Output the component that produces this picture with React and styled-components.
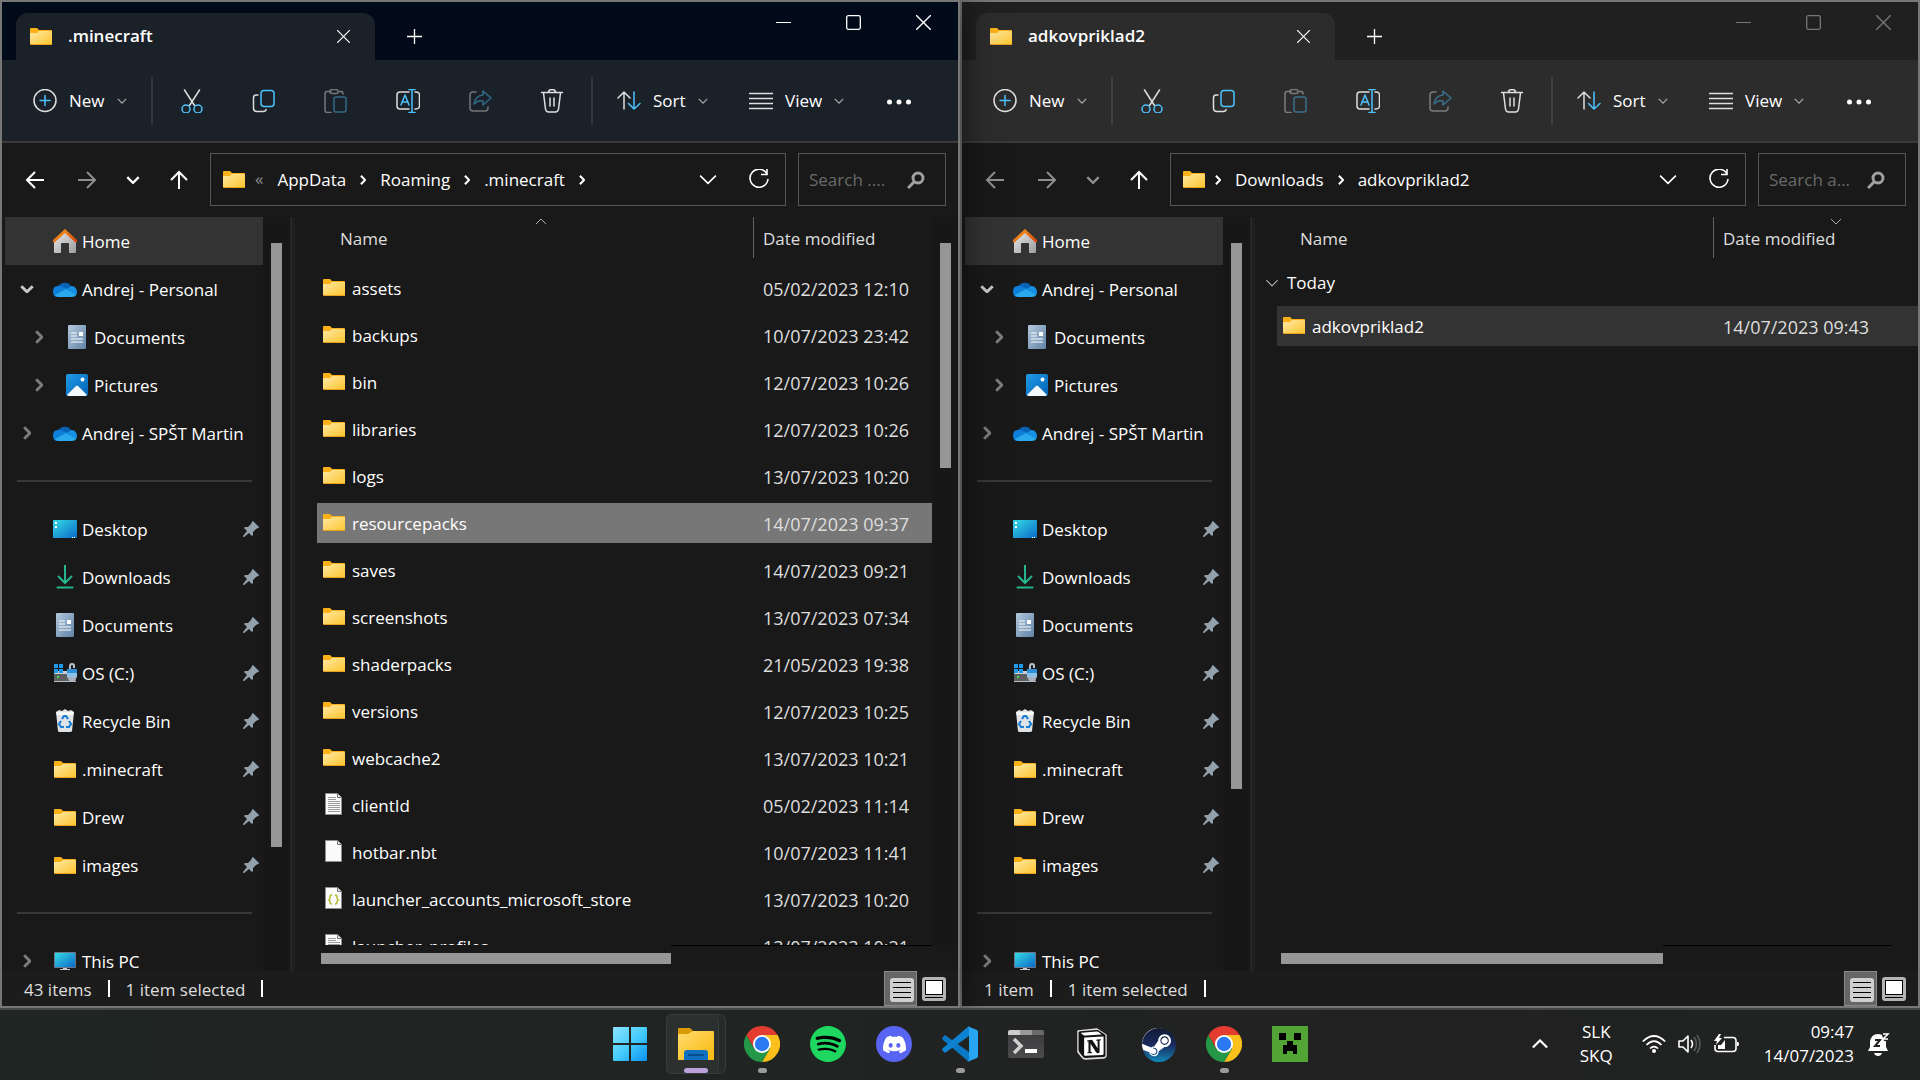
import React from "react";
import styled, { createGlobalStyle, css } from "styled-components";
import { SiDiscord, SiNotion, SiSpotify, SiSteam } from "react-icons/si";

const GlobalStyle = createGlobalStyle`
  *, *::before, *::after {
    box-sizing: border-box;
  }

  body {
    margin: 0;
    background: #191919;
    color: #fff;
    font-family: "Open Sans", "Noto Sans", sans-serif;
    font-size: 17px;
    line-height: 24px;
    overflow: hidden;
  }

  button, input, table {
    font: inherit;
    color: inherit;
  }

  button {
    display: flex;
    align-items: center;
    padding: 0;
    border: 0;
    background: none;
    text-align: left;
  }

  svg {
    display: block;
    flex: none;
  }
`;

const BLUE = "#4cc2ff";

/* ---------- icons ---------- */

const Defs = () => (
  <svg width="0" height="0" style={{ position: "absolute" }} aria-hidden="true">
    <defs>
      <linearGradient id="folder" x1="0" y1="0" x2="1" y2="1">
        <stop offset="0" stopColor="#ffe9a6" />
        <stop offset="1" stopColor="#fdc52f" />
      </linearGradient>
      <linearGradient id="bigFolder" x1="0" y1="0" x2="1" y2="1">
        <stop offset="0" stopColor="#ffdc6e" />
        <stop offset="1" stopColor="#f8b80c" />
      </linearGradient>
      <linearGradient id="screen" x1="0" y1="0" x2="1" y2="1">
        <stop offset="0" stopColor="#35dbe6" />
        <stop offset="1" stopColor="#0b68c8" />
      </linearGradient>
      <linearGradient id="paper" x1="0" y1="0" x2="1" y2="1">
        <stop offset="0" stopColor="#b4c8dc" />
        <stop offset="1" stopColor="#5f83a6" />
      </linearGradient>
      <linearGradient id="photo" x1="0" y1="0" x2="1" y2="1">
        <stop offset="0" stopColor="#1d9de8" />
        <stop offset="1" stopColor="#0560b5" />
      </linearGradient>
      <linearGradient id="roof" x1="0" y1="0" x2="1" y2="1">
        <stop offset="0" stopColor="#f9a01b" />
        <stop offset="1" stopColor="#d5420b" />
      </linearGradient>
      <linearGradient id="wall" x1="0" y1="0" x2="1" y2="1">
        <stop offset="0" stopColor="#e9e9e9" />
        <stop offset="1" stopColor="#9d9d9d" />
      </linearGradient>
      <linearGradient id="arrow" x1="0" y1="0" x2="1" y2="1">
        <stop offset="0" stopColor="#35c481" />
        <stop offset="1" stopColor="#12a5a0" />
      </linearGradient>
      <linearGradient id="start" x1="0" y1="0" x2="1" y2="1">
        <stop offset="0" stopColor="#8be3fd" />
        <stop offset="0.5" stopColor="#48ccfb" />
        <stop offset="1" stopColor="#0a93f5" />
      </linearGradient>
      <linearGradient id="steam" x1="0" y1="0" x2="0" y2="1">
        <stop offset="0" stopColor="#121a33" />
        <stop offset="0.5" stopColor="#1a2a5e" />
        <stop offset="1" stopColor="#1387b8" />
      </linearGradient>
      <linearGradient id="shell" x1="0" y1="0" x2="0" y2="1">
        <stop offset="0" stopColor="#3a3a3c" />
        <stop offset="1" stopColor="#4b4b4d" />
      </linearGradient>
    </defs>
  </svg>
);

const Folder = () => (
  <svg width="22" height="17" viewBox="0 0 22 17">
    <path d="M0 1q0-1 1-1h6l2 2h12q1 0 1 1v4H0z" fill="#fbb117" />
    <path d="M0 5h7l2-2h12q1 0 1 1v12H0z" fill="url(#folder)" />
    <path d="M0 16h22v1H1q-1 0-1-1z" fill="#e9a01c" />
  </svg>
);

const HomeIcon = () => (
  <svg width="24" height="24" viewBox="0 0 24 24">
    <path d="M1 11L12 2l11 9v12q0 1-1 1h-6v-9q0-1-1-1H9q-1 0-1 1v9H2q-1 0-1-1z" fill="url(#wall)" />
    <path d="M12 0L0 11v2q1 1 2 0L12 4l10 9q1 1 2 0v-2z" fill="url(#roof)" />
  </svg>
);

const Cloud = () => (
  <svg width="24" height="16" viewBox="0 0 24 16">
    <path d="M5 6a7 6 0 0 1 13-1l-4 7H3z" fill="#0862b4" />
    <path d="M5 5C1 5 0 8 0 11c0 2 1 4 3 5l13-6C12 6 9 5 5 5z" fill="#0f7fd8" />
    <path d="M14 8l4-3c4 0 6 3 6 6 0 2-1 4-3 4z" fill="#1491e2" />
    <path d="M2 14l11-6 10 6q-1 2-4 2H5q-2 0-3-2z" fill="#2aa8ec" />
  </svg>
);

const DocIcon = () => (
  <svg width="24" height="24" viewBox="0 0 24 24">
    <rect x="3" width="18" height="24" rx="1" fill="url(#paper)" />
    <path d="M6 8h6M6 11h6M6 14h12M6 17h12" stroke="#fff" strokeWidth="1.2" />
    <rect x="14" y="7" width="4" height="4" fill="#fff" />
  </svg>
);

const PicIcon = () => (
  <svg width="24" height="24" viewBox="0 0 24 24">
    <rect x="1" y="1" width="22" height="22" rx="2" fill="url(#photo)" />
    <path d="M2 22l9-9q1-1 2 0l9 9q-1 1-2 1H4q-1 0-2-1z" fill="#f4f9fd" />
    <circle cx="17.500" cy="6.500" r="2" fill="#fff" />
  </svg>
);

const DesktopIcon = () => (
  <svg width="24" height="18" viewBox="0 0 24 18">
    <rect width="24" height="18" rx="1" fill="url(#screen)" />
    <path d="M2 2h2v2H2zM2 6h2v2H2zM19 17h1v1h-1zM21 17h1v1h-1z" fill="#fff" />
  </svg>
);

const DownloadIcon = () => (
  <svg width="24" height="24" viewBox="0 0 24 24" fill="none" strokeWidth="2">
    <path d="M12 0v18M5 11l7 7 7-7" stroke="#26b58c" />
    <path d="M4 22h16v1H4z" fill="url(#arrow)" stroke="#26b58c" strokeWidth="1" />
  </svg>
);

const DriveIcon = () => (
  <svg width="24" height="20" viewBox="0 0 24 20">
    <path d="M1 10h22v9H1z" fill="#5c5f62" />
    <path d="M1 11L3 8h18l2 3z" fill="#c8ccd0" />
    <path d="M1 18h22v1H1z" fill="#b9bdc0" />
    <path d="M1 1h4v4H1zM6 1h4v4H6zM1 6h4v4H1zM6 6h4v4H6z" fill="#1c9cea" />
    <rect x="4" y="13" width="2" height="2" fill="#3ce03c" />
    <path d="M17 7V3q0-2 2-2t2 2v2" fill="none" stroke="#b6bfc7" strokeWidth="2" />
    <rect x="14" y="6" width="10" height="4" fill="#2b8fdb" />
    <rect x="14" y="10" width="10" height="4" fill="#8fbfe4" />
    <path d="M14 14h10l-3 5h-4z" fill="#a7b4bf" />
  </svg>
);

const BinIcon = () => (
  <svg width="24" height="24" viewBox="0 0 24 24">
    <path d="M3 3l3-2 3 1 3-2 3 2 3-1 3 2-2 19q0 1-2 1H7q-2 0-2-1z" fill="#dfe3e6" />
    <path d="M3 3h18l-1 3H4z" fill="#f9fafb" />
    <g fill="none" stroke="#1b7fd6" strokeWidth="2.200">
      <path d="M9 10l2-3h2l2 3" />
      <path d="M16 12l2 3-2 3h-3" />
      <path d="M11 18H8l-2-3 2-3" />
    </g>
  </svg>
);

const PcIcon = () => (
  <svg width="24" height="20" viewBox="0 0 24 20">
    <rect x="1" y="1" width="22" height="16" rx="1" fill="#66788a" />
    <rect x="2" y="2" width="20" height="14" fill="url(#screen)" />
    <path d="M10 17h4v1h3v1H7v-1h3z" fill="#c3ccd4" />
  </svg>
);

const Pin = () => (
  <svg width="16" height="16" viewBox="0 0 16 16">
    <path d="M10 0l6 6q0 1-1 1l-2 1-3 3v3l-1 1-3-3-5 4H0v-1l4-5-3-3 1-1h3l3-3 1-2q0-1 1-1z" fill="#93a1ac" />
  </svg>
);

const Page = ({ kind }) => (
  <svg width="22" height="22" viewBox="0 0 22 22">
    <path d="M2.500.5h12l4 4v17h-16z" fill="#fafafa" stroke="#8d8d8d" />
    <path d="M14.500.5v4h4" fill="#ddd" stroke="#777" />
    {kind === "text" && (
      <path d="M5 4.500h8M5 6.500h8M5 8.500h12M5 10.500h12M5 12.500h12M5 14.500h12M5 16.500h12M5 18.500h12" stroke="#9a9a9a" />
    )}
    {kind === "json" && (
      <path
        d="M9 8q-2 0-2 2t-1 3q1 0 1 2t2 2M12 8q2 0 2 2t1 3q-1 0-1 2t-2 2"
        fill="none"
        stroke="#b5b832"
        strokeWidth="1.500"
      />
    )}
  </svg>
);

const CHEVRONS = {
  down: "M0 0l5 5 5-5",
  up: "M0 5l5-5 5 5",
  right: "M0 0l5 5-5 5",
};

const Chevron = ({ dir = "down", size = 10, weight = 1.5, color = "currentColor" }) => {
  const right = dir === "right";
  return (
    <svg
      width={right ? size / 2 + 2 : size + 2}
      height={right ? size + 2 : size / 2 + 2}
      viewBox={right ? "-1 -1 7 12" : "-1 -1 12 7"}
      fill="none"
      stroke={color}
      strokeWidth={weight}
    >
      <path d={CHEVRONS[dir]} />
    </svg>
  );
};

const Cross = ({ size = 14 }) => (
  <svg width={size} height={size} viewBox="0 0 14 14" stroke="currentColor" strokeWidth="1.300">
    <path d="M0 0l14 14M14 0L0 14" />
  </svg>
);

const ToolIcon = ({ children }) => (
  <svg
    width="24"
    height="24"
    viewBox="0 0 24 24"
    fill="none"
    stroke="#dedede"
    strokeWidth="1.500"
    strokeLinecap="round"
    strokeLinejoin="round"
  >
    {children}
  </svg>
);

const NewIcon = () => (
  <ToolIcon>
    <circle cx="12" cy="11.500" r="11" />
    <path d="M12 6.500v10M7 11.500h10" stroke={BLUE} />
  </ToolIcon>
);

const CutIcon = () => (
  <ToolIcon>
    <path d="M4.500 1l10 15.500M19.500 1l-10 15.500" />
    <circle cx="6" cy="20" r="4" stroke={BLUE} />
    <circle cx="18" cy="20" r="4" stroke={BLUE} />
  </ToolIcon>
);

const CopyIcon = () => (
  <ToolIcon>
    <path d="M6 6H4Q1.500 6 1.500 9v10q0 3.500 3.500 3.500h6q3 0 3-2" />
    <rect x="9" y="1.500" width="13" height="16" rx="3" stroke={BLUE} />
  </ToolIcon>
);

const PasteIcon = () => (
  <ToolIcon>
    <g opacity="0.45">
      <path d="M7 2.500H3Q1 2.500 1 5v16q0 2.500 2 2.500h4M15 2.500h2q2 0 2 2.500" />
      <rect x="6" y="0.500" width="8" height="4" rx="2" />
      <rect x="10" y="8" width="12" height="15" rx="2" stroke={BLUE} />
    </g>
  </ToolIcon>
);

const RenameIcon = () => (
  <ToolIcon>
    <path d="M13 3H4Q1 3 1 6v11q0 3 3 3h9M19 3h1q3.500 0 3.500 3v11q0 3-3.500 3h-1" />
    <path d="M5 16l4-10 4 10M6 13h6M16 .5v23M13 .5h6M13 23.500h6" stroke={BLUE} />
  </ToolIcon>
);

const ShareIcon = () => (
  <ToolIcon>
    <g opacity="0.45">
      <path d="M8 3H5Q2 3 2 6v13q0 3 3 3h12q3 0 3-3v-1" />
      <path d="M15 2l8 7-8 7v-4q-5-1-9 3 1-8 9-9z" stroke={BLUE} />
    </g>
  </ToolIcon>
);

const TrashIcon = () => (
  <ToolIcon>
    <path d="M1.500 3.500h21M8.500 3q0-2.500 3.500-2.500t3.500 2.500M3.500 4l2 16q.5 3 3 3h7q2.500 0 3-3l2-16M10 9v8M14 9v8" />
  </ToolIcon>
);

const SortIcon = () => (
  <ToolIcon>
    <path d="M7 20V3M1 9l6-6 6 6" />
    <path d="M17 3v17M11.500 14.500l5.500 5.500 6-5.500" stroke={BLUE} />
  </ToolIcon>
);

const ViewIcon = () => (
  <ToolIcon>
    <path d="M0 4.500h24M0 9.500h24M0 14.500h24M0 19.500h24" strokeLinecap="butt" />
  </ToolIcon>
);

const DotsIcon = () => (
  <svg width="24" height="24" viewBox="0 0 24 24" fill="#fff">
    <circle cx="2.500" cy="13" r="2.500" />
    <circle cx="12" cy="13" r="2.500" />
    <circle cx="21.500" cy="13" r="2.500" />
  </svg>
);

const Arrow = ({ turn = 0, dim }) => (
  <svg width="20" height="20" viewBox="0 0 20 20" fill="none" stroke={dim ? "#8f8f8f" : "#fff"} strokeWidth="2">
    <path d="M19 10H2M10 2l-8 8 8 8" transform={`rotate(${turn} 10 10)`} />
  </svg>
);

const Refresh = () => (
  <svg width="22" height="22" viewBox="0 0 22 22" fill="none" stroke="#fff" strokeWidth="1.600">
    <path d="M19 5a9 9 0 1 0 1 5M19 0v5.500h-6" />
  </svg>
);

const Magnifier = () => (
  <svg width="18" height="18" viewBox="0 0 18 18" fill="none" stroke="#a0a0a0">
    <circle cx="11" cy="7" r="5" strokeWidth="3" />
    <path d="M7 11l-6 6" strokeWidth="3" />
  </svg>
);

const Details = () => (
  <svg width="24" height="24" viewBox="0 0 24 24">
    <rect width="24" height="24" rx="3" fill="#cfcfcf" />
    <path d="M3 4.500h18M3 9.500h18M3 14.500h18M3 19.500h18" stroke="#000" />
  </svg>
);

const Large = () => (
  <svg width="24" height="24" viewBox="0 0 24 24">
    <rect width="24" height="24" rx="3" fill="#b4b4b4" />
    <rect x="3.500" y="3.500" width="17" height="14" fill="#fff" stroke="#000" />
    <path d="M3 20.500h18" stroke="#000" />
  </svg>
);

/* ---------- explorer window ---------- */

const Frame = styled.section`
  display: flex;
  flex-direction: column;
  min-width: 0;
  min-height: 0;
  border: 2px solid #777;
  background: #191919;
  ${({ $active }) =>
    $active &&
    css`
      position: relative;
      z-index: 1;
      box-shadow: 0 0 36px rgba(0, 0, 0, 0.6);
    `}
`;

const TitleBar = styled.header`
  display: flex;
  align-items: flex-end;
  height: 58px;
  padding-left: 14px;
  background: ${({ $active }) => ($active ? "#010a18" : "#202020")};
`;

const Tab = styled.div`
  display: flex;
  align-items: center;
  gap: 16px;
  width: 359px;
  height: 47px;
  padding: 0 25px 1px 14px;
  border-radius: 12px 12px 0 0;
  background: ${({ $active }) => ($active ? "#1b2129" : "#2c2c2c")};
  font-weight: 600;

  span {
    flex: 1;
  }
`;

const NewTab = styled.button`
  justify-content: center;
  width: 78px;
  height: 47px;
`;

const Captions = styled.div`
  display: flex;
  align-self: flex-start;
  margin-left: auto;
  color: ${({ $active }) => ($active ? "#fff" : "#777")};

  button {
    justify-content: center;
    width: 70px;
    height: 40px;
  }
`;

const Toolbar = styled.div`
  display: flex;
  align-items: center;
  height: 83px;
  border-bottom: 2px solid #3a3a3a;
  background: ${({ $active }) => ($active ? "#1b2129" : "#2c2c2c")};
`;

const ToolGroup = styled.div`
  display: flex;
  padding: 0 3px;
`;

const Tool = styled.button`
  justify-content: center;
  width: 72px;
  height: 48px;
`;

const MenuTool = styled.button`
  gap: 12px;
  width: ${({ $width }) => $width};
  height: 48px;
  padding-top: 1px;
  padding-left: ${({ $pad }) => $pad || "24px"};
  font-weight: 500;
`;

const Split = styled.div`
  width: 2px;
  height: 48px;
  background: rgba(255, 255, 255, 0.1);
`;

const AddressRow = styled.div`
  display: flex;
  padding: 10px 12px 11px 7px;
`;

const Step = styled.button`
  justify-content: center;
  width: ${({ $width }) => $width};
  height: 53px;
`;

const AddressBar = styled.div`
  display: flex;
  align-items: center;
  flex: 1;
  height: 53px;
  margin: 0 12px 0 4px;
  padding: 0 1px 0 12px;
  border: 1px solid #575757;
`;

const Crumbs = styled.nav`
  display: flex;
  align-items: center;
  gap: 14px;
  flex: 1;
  padding-left: 10px;

  a {
    color: inherit;
    text-decoration: none;
  }
`;

const Overflow = styled.span`
  padding-bottom: 1px;
  color: #8f8f8f;
`;

const BarButton = styled.button`
  justify-content: center;
  width: 51px;
  height: 51px;
`;

const Search = styled.label`
  display: flex;
  align-items: center;
  width: 148px;
  height: 53px;
  padding: 0 20px 0 10px;
  border: 1px solid #575757;

  input {
    flex: 1;
    min-width: 0;
    padding: 1px 0 0;
    border: 0;
    outline: 0;
    background: none;
  }

  input::placeholder {
    color: #6a6a6a;
    opacity: 1;
  }
`;

const Body = styled.div`
  display: flex;
  flex: 1;
  min-height: 0;
`;

const Tree = styled.nav`
  width: 261px;
  padding-left: 3px;
  overflow: hidden;
`;

const TreeItem = styled.button`
  width: 258px;
  height: 48px;
  padding: 0 4px 0 ${({ $level }) => ($level ? "12px" : "0")};
  background: ${({ $current }) => ($current ? "#333" : "none")};
`;

const Twisty = styled.span`
  display: flex;
  justify-content: center;
  width: 44px;
`;

const TreeIcon = styled.span`
  display: flex;
  justify-content: center;
  width: 24px;
  margin: 0 5px 0 4px;
`;

const TreeLabel = styled.span`
  flex: 1;
  padding-top: 2px;
  white-space: nowrap;
`;

const TreeRule = styled.hr`
  height: 2px;
  margin: 23px 11px 23px 12px;
  border: 0;
  background: #383838;
`;

const Track = styled.div`
  width: ${({ $width }) => $width};
  padding: 26px 7px 0 8px;
  background: #171717;
`;

const Thumb = styled.div`
  width: 11px;
  height: ${({ $size }) => $size};
  background: #969696;
`;

const Splitter = styled.div`
  width: 5px;
  border-left: 2px solid #262626;
  background: #1f1f1f;
`;

const Listing = styled.main`
  display: flex;
  flex-direction: column;
  flex: 1;
  min-width: 0;
`;

const Viewport = styled.div`
  flex: 1;
  min-height: 0;
  padding-left: 22px;
  overflow: hidden;
`;

const Files = styled.table`
  width: 100%;
  table-layout: fixed;
  border-collapse: separate;
  border-spacing: 0;

  th {
    position: relative;
    height: 41px;
    padding: 2px 0 0 23px;
    color: #dedede;
    font-weight: 400;
    text-align: left;
  }

  th:last-child {
    width: ${({ $dateWidth }) => $dateWidth};
    padding-left: 9px;
    border-left: 1px solid #636363;
  }

  tbody::before {
    content: "";
    display: block;
    height: 6px;
  }
`;

const SortMark = styled.span`
  position: absolute;
  top: 1px;
  left: ${({ $left }) => $left};
`;

const GroupRow = styled.tr`
  td {
    height: 38px;
    padding: 0;
  }

  button {
    gap: 8px;
    margin-left: -12px;
  }
`;

const FileRow = styled.tr`
  td {
    height: 47px;
    padding: 2px 0 0 6px;
    border: solid transparent;
    border-width: 4px 0 3px;
    background-color: ${({ $tone }) => $tone || "transparent"};
    background-clip: padding-box;
    white-space: nowrap;
  }

  td:last-child {
    padding-left: 10px;
    color: #dedede;
    font-size: 18px;
  }
`;

const FileName = styled.span`
  display: flex;
  align-items: center;
  gap: 7px;

  svg {
    margin-bottom: 4px;
  }
`;

const HTrack = styled.div`
  display: flex;
  align-items: center;
  height: 26px;
  padding-left: 26px;
`;

const HThumb = styled.div`
  width: ${({ $size }) => $size};
  height: 11px;
  background: #969696;
`;

const HRest = styled.div`
  flex: 1;
  align-self: flex-start;
  height: 1px;
  margin-right: 26px;
  background: #000;
`;

const StatusBar = styled.footer`
  display: flex;
  align-items: center;
  gap: 16px;
  height: 35px;
  padding: 0 12px 0 22px;
  background: #1c1c1c;
  color: #dedede;
`;

const StatusText = styled.span`
  padding-top: 2px;
`;

const Tick = styled.span`
  width: 2px;
  height: 17px;
  background: #fff;
`;

const Modes = styled.div`
  display: flex;
  gap: 5px;
  margin-left: auto;
`;

const Mode = styled.button`
  justify-content: center;
  height: 35px;
  ${({ $on }) =>
    $on &&
    css`
      width: 33px;
      padding: 2px 0 0 2px;
      border: 1px solid #888;
      background: #666;
    `}
`;

const TREE = [
  { label: "Home", icon: HomeIcon, current: true },
  { label: "Andrej - Personal", icon: Cloud, open: true },
  { label: "Documents", icon: DocIcon, level: 1, closed: true },
  { label: "Pictures", icon: PicIcon, level: 1, closed: true },
  { label: "Andrej - SPŠT Martin", icon: Cloud, closed: true },
  null,
  { label: "Desktop", icon: DesktopIcon, pinned: true },
  { label: "Downloads", icon: DownloadIcon, pinned: true },
  { label: "Documents", icon: DocIcon, pinned: true },
  { label: "OS (C:)", icon: DriveIcon, pinned: true },
  { label: "Recycle Bin", icon: BinIcon, pinned: true },
  { label: ".minecraft", icon: Folder, pinned: true },
  { label: "Drew", icon: Folder, pinned: true },
  { label: "images", icon: Folder, pinned: true },
  null,
  { label: "This PC", icon: PcIcon, closed: true },
];

const NavTree = () => (
  <Tree aria-label="Navigation pane">
    {TREE.map((item, i) => {
      if (!item) return <TreeRule key={i} />;
      const { label, icon: Icon, level, current, open, closed, pinned } = item;
      return (
        <TreeItem key={i} $level={level} $current={current}>
          <Twisty>
            {open && <Chevron size={12} weight={2.5} color="#c8c8c8" />}
            {closed && <Chevron dir="right" size={12} weight={2.5} color="#7c7c7c" />}
          </Twisty>
          <TreeIcon>
            <Icon />
          </TreeIcon>
          <TreeLabel>{label}</TreeLabel>
          {pinned && <Pin />}
        </TreeItem>
      );
    })}
  </Tree>
);

const CommandBar = ({ active }) => (
  <Toolbar $active={active}>
    <MenuTool $width="149px" $pad="31px">
      <NewIcon />
      New
      <Chevron size={8} color="#aaa" />
    </MenuTool>
    <Split />
    <ToolGroup>
      <Tool aria-label="Cut"><CutIcon /></Tool>
      <Tool aria-label="Copy"><CopyIcon /></Tool>
      <Tool aria-label="Paste" disabled><PasteIcon /></Tool>
      <Tool aria-label="Rename"><RenameIcon /></Tool>
      <Tool aria-label="Share" disabled><ShareIcon /></Tool>
      <Tool aria-label="Delete"><TrashIcon /></Tool>
    </ToolGroup>
    <Split />
    <MenuTool $width="132px">
      <SortIcon />
      Sort
      <Chevron size={8} color="#aaa" />
    </MenuTool>
    <MenuTool $width="138px">
      <ViewIcon />
      View
      <Chevron size={8} color="#aaa" />
    </MenuTool>
    <Tool aria-label="See more"><DotsIcon /></Tool>
  </Toolbar>
);

const FileTable = ({ files, group, sortBy, dateWidth }) => (
  <Files $dateWidth={dateWidth}>
    <thead>
      <tr>
        <th>
          Name
          {sortBy === "name" && (
            <SortMark $left="50%">
              <Chevron dir="up" size={10} weight={1} color="#aaa" />
            </SortMark>
          )}
        </th>
        <th>
          Date modified
          {sortBy === "date" && (
            <SortMark $left="116px">
              <Chevron size={10} weight={1} color="#aaa" />
            </SortMark>
          )}
        </th>
      </tr>
    </thead>
    <tbody>
      {group && (
        <GroupRow>
          <td colSpan={2}>
            <button>
              <Chevron size={12} weight={1} color="#aaa" />
              {group}
            </button>
          </td>
        </GroupRow>
      )}
      {files.map(({ name, date, kind, tone }) => (
        <FileRow key={name} $tone={tone}>
          <td>
            <FileName>
              {kind ? <Page kind={kind} /> : <Folder />}
              {name}
            </FileName>
          </td>
          <td>{date}</td>
        </FileRow>
      ))}
    </tbody>
  </Files>
);

const Explorer = ({
  active,
  title,
  path,
  search,
  files,
  group,
  sortBy,
  count,
  treeThumb,
  listThumb,
  bottomThumb,
}) => (
  <Frame $active={active} aria-label={title}>
    <TitleBar $active={active}>
      <Tab $active={active}>
        <Folder />
        <span>{title}</span>
        <button aria-label="Close tab">
          <Cross size={13} />
        </button>
      </Tab>
      <NewTab aria-label="New tab">
        <svg width="15" height="15" viewBox="0 0 15 15" stroke="#fff" strokeWidth="1.300">
          <path d="M7.500 0v15M0 7.500h15" />
        </svg>
      </NewTab>
      <Captions $active={active}>
        <button aria-label="Minimize">
          <svg width="15" height="15" viewBox="0 0 15 15" stroke="currentColor">
            <path d="M0 7.500h15" />
          </svg>
        </button>
        <button aria-label="Maximize">
          <svg width="15" height="15" viewBox="0 0 15 15" fill="none" stroke="currentColor" strokeWidth="1.300">
            <rect x="0.700" y="0.700" width="13.600" height="13.600" rx="1.500" />
          </svg>
        </button>
        <button aria-label="Close">
          <Cross size={15} />
        </button>
      </Captions>
    </TitleBar>

    <CommandBar active={active} />

    <AddressRow>
      <Step $width="52px" aria-label="Back"><Arrow dim={!active} /></Step>
      <Step $width="52px" aria-label="Forward"><Arrow turn={180} dim /></Step>
      <Step $width="39px" aria-label="Recent locations">
        <Chevron size={12} weight={2} color={active ? "#fff" : "#8f8f8f"} />
      </Step>
      <Step $width="54px" aria-label="Up"><Arrow turn={90} /></Step>
      <AddressBar>
        <Folder />
        <Crumbs aria-label="Address">
          {active ? <Overflow>«</Overflow> : <Chevron dir="right" size={8} weight={2.5} />}
          {path.map((part, i) => (
            <React.Fragment key={part}>
              <a href="#path">{part}</a>
              {(active || i < path.length - 1) && <Chevron dir="right" size={8} weight={2.5} />}
            </React.Fragment>
          ))}
        </Crumbs>
        <BarButton aria-label="Previous locations">
          <Chevron size={18} weight={1} />
        </BarButton>
        <BarButton aria-label="Refresh">
          <Refresh />
        </BarButton>
      </AddressBar>
      <Search>
        <input type="text" placeholder={search} aria-label="Search" />
        <Magnifier />
      </Search>
    </AddressRow>

    <Body>
      <NavTree />
      <Track $width="27px">
        <Thumb $size={treeThumb} />
      </Track>
      <Splitter />
      <Listing>
        <Body>
          <Viewport>
            <FileTable
              files={files}
              group={group}
              sortBy={sortBy}
              dateWidth={listThumb ? "179px" : "205px"}
            />
          </Viewport>
          {listThumb && (
            <Track $width="26px">
              <Thumb $size={listThumb} />
            </Track>
          )}
        </Body>
        <HTrack>
          <HThumb $size={bottomThumb} />
          <HRest />
        </HTrack>
      </Listing>
    </Body>

    <StatusBar>
      <StatusText>{count}</StatusText>
      <Tick />
      <StatusText>1 item selected</StatusText>
      <Tick />
      <Modes>
        <Mode $on aria-label="Details"><Details /></Mode>
        <Mode aria-label="Large icons"><Large /></Mode>
      </Modes>
    </StatusBar>
  </Frame>
);

const MINECRAFT = [
  { name: "assets", date: "05/02/2023 12:10" },
  { name: "backups", date: "10/07/2023 23:42" },
  { name: "bin", date: "12/07/2023 10:26" },
  { name: "libraries", date: "12/07/2023 10:26" },
  { name: "logs", date: "13/07/2023 10:20" },
  { name: "resourcepacks", date: "14/07/2023 09:37", tone: "#777" },
  { name: "saves", date: "14/07/2023 09:21" },
  { name: "screenshots", date: "13/07/2023 07:34" },
  { name: "shaderpacks", date: "21/05/2023 19:38" },
  { name: "versions", date: "12/07/2023 10:25" },
  { name: "webcache2", date: "13/07/2023 10:21" },
  { name: "clientId", date: "05/02/2023 11:14", kind: "text" },
  { name: "hotbar.nbt", date: "10/07/2023 11:41", kind: "blank" },
  { name: "launcher_accounts_microsoft_store", date: "13/07/2023 10:20", kind: "json" },
  { name: "launcher_profiles", date: "13/07/2023 10:21", kind: "text" },
];

const DOWNLOADS = [{ name: "adkovpriklad2", date: "14/07/2023 09:43", tone: "#333" }];

/* ---------- taskbar ---------- */

const Taskbar = styled.footer`
  position: relative;
  z-index: 2;
  display: grid;
  grid-template-columns: 1fr auto 1fr;
  height: 72px;
  padding: 4px 0 6px;
  border-top: 2px solid #454747;
  background: linear-gradient(90deg, #202623, #202422 40%, #212121 75%, #1f2422);
`;

const Apps = styled.div`
  display: flex;
  grid-column: 2;
`;

const App66 = styled.button`
  position: relative;
  justify-content: center;
  width: 66px;
  height: 60px;
`;

const Card = styled.span`
  position: absolute;
  inset: 0 ${({ $back }) => ($back ? "3px" : "10px")} 0 3px;
  border: 1px solid #383c3a;
  border-radius: 6px;
  background: ${({ $back }) => ($back ? "#262a29" : "#2c302f")};
`;

const AppArt = styled.span`
  position: relative;
  display: grid;
  place-items: center;

  > * {
    grid-area: 1 / 1;
  }
`;

const Running = styled.span`
  position: absolute;
  bottom: 1px;
  width: ${({ $wide }) => ($wide ? "24px" : "9px")};
  height: 5px;
  border-radius: 3px;
  background: ${({ $wide }) => ($wide ? "#bd9fd9" : "#9b9b9b")};
`;

const Disc = styled.span`
  display: grid;
  place-items: center;
  width: ${({ $size }) => $size || "36px"};
  height: ${({ $size }) => $size || "36px"};
  border-radius: 50%;
  background: ${({ $color }) => $color};
`;

const Tray = styled.div`
  display: flex;
  align-items: center;
  justify-content: flex-end;
  padding-right: 30px;
`;

const TrayButton = styled.button`
  justify-content: center;
  gap: 12px;
  margin-right: ${({ $gap }) => $gap};
  text-align: ${({ $align }) => $align || "center"};
`;

const StartIcon = () => (
  <svg width="36" height="36" viewBox="0 0 36 36">
    <path d="M2 1h15v16H1V2q0-1 1-1zM19 1h15q1 0 1 1v15H19zM1 19h16v16H2q-1 0-1-1zM19 19h16v15q0 1-1 1H19z" fill="url(#start)" />
  </svg>
);

const FilesIcon = () => (
  <svg width="36" height="36" viewBox="0 0 36 36">
    <path d="M0 3q0-1 1-1h11l4 4h-1l-4 4H0z" fill="#dc9a06" />
    <path d="M0 8h10l5-3h20q1 0 1 1v28H0z" fill="url(#bigFolder)" />
    <path d="M6 34V27q0-3 3-3h18q3 0 3 3v7z" fill="#0f6fc0" />
    <path d="M11 29h14" stroke="#0a4a86" strokeWidth="2" strokeLinecap="round" />
  </svg>
);

const ChromeIcon = () => (
  <svg width="36" height="36" viewBox="0 0 36 36">
    <path d="M18 9h15.600A18 18 0 0 1 18 36l8-13.500z" fill="#fcc01b" />
    <path d="M2.400 9A18 18 0 0 0 18 36l8-13.500H10z" fill="#259847" />
    <path d="M18 9h15.600A18 18 0 0 0 2.400 9l7.800 13.500z" fill="#e53c31" />
    <circle cx="18" cy="18" r="9" fill="#fff" />
    <circle cx="18" cy="18" r="7.200" fill="#2b79f0" />
  </svg>
);

const CodeIcon = () => (
  <svg width="36" height="36" viewBox="0 0 36 36">
    <path d="M0 12l3-3 24 17v10L1 14q-1-1-1-2z" fill="#0a78c4" />
    <path d="M0 24l3 3 24-17V0L1 22q-1 1-1 2z" fill="#0d83d1" />
    <path d="M25 0l10 4q1 1 1 2v24q0 1-1 2l-10 4q2-1 2-3V3q0-2-2-3z" fill="#27a5f2" />
  </svg>
);

const TerminalIcon = () => (
  <svg width="36" height="28" viewBox="0 0 36 28">
    <rect width="36" height="28" rx="2" fill="url(#shell)" />
    <path d="M0 5V2q0-2 2-2h10v5z" fill="#ccc" />
    <path d="M12 0h12v5H12z" fill="#999" />
    <path d="M24 0h10q2 0 2 2v3H24z" fill="#6a6a6a" />
    <path d="M6 9l7 7-7 7" fill="none" stroke="#d0d0d0" strokeWidth="3.500" />
    <path d="M17 19h12v4H17z" fill="#fff" />
  </svg>
);

const NotionIcon = () => (
  <AppArt>
    <svg width="32" height="32" viewBox="0 0 32 32">
      <path d="M2 3l19-2 9 6v20q0 3-3 3L9 31q-2 0-3-2l-4-5z" fill="#fff" stroke="#ddd" strokeWidth="1.500" strokeLinejoin="round" />
    </svg>
    <SiNotion size={28} color="#111" />
  </AppArt>
);

const CreeperIcon = () => (
  <svg width="36" height="36" viewBox="0 0 36 36">
    <path d="M0 0h36v36H0z" fill="#52a535" />
    <path d="M7 7h7v7H7zM22 7h7v7h-7zM15 15h6v4h4v9h-4v-3h-6v3h-4v-9h4z" fill="#000" />
  </svg>
);

const APPS = [
  { name: "Start", art: <StartIcon /> },
  { name: "File Explorer", art: <FilesIcon />, focused: true },
  { name: "Google Chrome", art: <ChromeIcon />, running: true },
  { name: "Spotify", art: <Disc $color="#000"><SiSpotify size={36} color="#1ed760" /></Disc> },
  { name: "Discord", art: <Disc $color="#5865f2"><SiDiscord size={23} color="#fff" /></Disc> },
  { name: "Visual Studio Code", art: <CodeIcon />, running: true },
  { name: "Terminal", art: <TerminalIcon /> },
  { name: "Notion", art: <NotionIcon /> },
  { name: "Steam", art: <Disc $color="#fff" $size="32px"><SiSteam size={34} fill="url(#steam)" /></Disc> },
  { name: "Google Chrome (2)", art: <ChromeIcon />, running: true },
  { name: "Minecraft", art: <CreeperIcon /> },
];

const WifiIcon = () => (
  <svg width="24" height="20" viewBox="0 0 24 20" fill="none" stroke="#fff" strokeWidth="1.700">
    <path d="M0.800 7.500q11.200-11 22.400 0M4.500 11q7.500-7.500 15 0M8 14.500q4-4 8 0" />
    <circle cx="12" cy="17" r="2" fill="#fff" stroke="none" />
  </svg>
);

const VolumeIcon = () => (
  <svg width="24" height="20" viewBox="0 0 24 20" fill="none" stroke="#fff" strokeWidth="1.600">
    <path d="M1 7h4l5-5v16l-5-5H1z" strokeLinejoin="round" />
    <path d="M13 6q3 4 0 8" />
    <path d="M16 3q5 7 0 14M19 1q6 9 0 18" stroke="#565a59" />
  </svg>
);

const BatteryIcon = () => (
  <svg width="25" height="20" viewBox="0 0 25 20">
    <path d="M10 3.500h9q3 0 3 3v8q0 3-3 3H4q-3 0-3-3V11" fill="none" stroke="#fff" strokeWidth="1.600" />
    <path d="M11 6v9H4v-4h3zM23 8h1q1 0 1 2t-1 2h-1z" fill="#fff" />
    <path d="M5 0L0 7h3l-1 4 6-7H5l2-4z" fill="#fff" />
  </svg>
);

const BellIcon = () => (
  <svg width="22" height="24" viewBox="0 0 22 24">
    <path d="M10 2q7 0 8 8v5l2 4H0l2-4v-5q1-8 8-8zM6 21h8q-1 3-4 3t-4-3z" fill="#fff" />
    <path d="M7 8h5l-5 6h5" fill="none" stroke="#202422" strokeWidth="2" />
    <path d="M13 0h8v9h-5z" fill="#202422" />
    <path d="M15 2h5l-5 5h5" fill="none" stroke="#fff" strokeWidth="1.500" />
  </svg>
);

const Desktop = styled.div`
  display: flex;
  flex-direction: column;
  height: 100vh;
`;

const Windows = styled.div`
  display: grid;
  grid-template-columns: 1fr 1fr;
  grid-template-rows: minmax(0, 1fr);
  flex: 1;
  min-height: 0;
`;

export default () => (
  <>
    <GlobalStyle />
    <Defs />

    <Desktop>
      <Windows>
        <Explorer
          active
          title=".minecraft"
          path={["AppData", "Roaming", ".minecraft"]}
          search="Search ...."
          files={MINECRAFT}
          sortBy="name"
          count="43 items"
          treeThumb="83%"
          listThumb="32%"
          bottomThumb="55%"
        />
        <Explorer
          title="adkovpriklad2"
          path={["Downloads", "adkovpriklad2"]}
          search="Search a..."
          files={DOWNLOADS}
          group="Today"
          sortBy="date"
          count="1 item"
          treeThumb="75%"
          bottomThumb="60%"
        />
      </Windows>

      <Taskbar>
        <Apps>
          {APPS.map(({ name, art, focused, running }) => (
            <App66 key={name} aria-label={name}>
              {focused && (
                <>
                  <Card $back />
                  <Card />
                </>
              )}
              <AppArt>{art}</AppArt>
              {(focused || running) && <Running $wide={focused} />}
            </App66>
          ))}
        </Apps>
        <Tray>
          <TrayButton $gap="31px" aria-label="Show hidden icons">
            <Chevron dir="up" size={16} weight={1.5} />
          </TrayButton>
          <TrayButton $gap="29px">
            SLK
            <br />
            SKQ
          </TrayButton>
          <TrayButton $gap="25px" aria-label="Network, volume and battery">
            <WifiIcon />
            <VolumeIcon />
            <BatteryIcon />
          </TrayButton>
          <TrayButton $gap="14px" $align="right">
            09:47
            <br />
            14/07/2023
          </TrayButton>
          <TrayButton $gap="0" aria-label="Notifications">
            <BellIcon />
          </TrayButton>
        </Tray>
      </Taskbar>
    </Desktop>
  </>
);
